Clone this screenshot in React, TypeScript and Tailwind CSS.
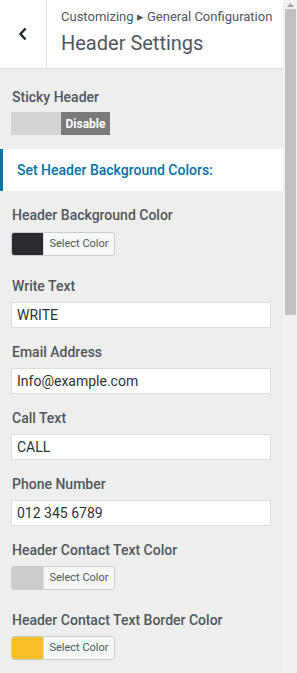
import React from "react";

const font = { fontFamily: "Roboto, 'Noto Sans', sans-serif" };

function Label({ children }: { children: React.ReactNode }) {
  return (
    <div className="pl-[1px] h-[20px] leading-[20px] text-[14px] font-medium text-[#50575e]">{children}</div>
  );
}

function TextField({ label, value }: { label: string; value: string }) {
  return (
    <div className="mb-[14px]">
      <Label>{label}</Label>
      <div className="mt-[6px] w-[260px] h-[26px] bg-white border border-[#dddddd] px-[5px] flex items-center text-[14px] text-[#2c3338]">
        {value}
      </div>
    </div>
  );
}

function ColorButton({ color }: { color: string }) {
  return (
    <div className="flex w-[104px] h-[24px] rounded-[3px] border border-[#cccccc] overflow-hidden bg-[#f6f7f7]">
      <div className="w-[31px] h-full" style={{ backgroundColor: color }} />
      <div className="flex-1 border-l border-[#dcdcde] flex items-center justify-center text-[11px] text-[#50575e]">
        Select Color
      </div>
    </div>
  );
}

function ColorField({ label, color, last }: { label: string; color: string; last?: boolean }) {
  return (
    <div className={last ? "" : "mb-[20px]"}>
      <Label>{label}</Label>
      <div className="mt-[6px]">
        <ColorButton color={color} />
      </div>
    </div>
  );
}

export default function App() {
  return (
    <div className="w-[297px] h-[673px] flex overflow-hidden bg-[#eeeeee]" style={font}>
      <div className="w-[283px] h-full flex flex-col">
        <div className="h-[69px] bg-white border-b border-[#dddddd] flex shrink-0">
          <div className="w-[47px] h-full border-r border-[#dddddd] flex items-center justify-center">
            <svg width="10" height="14" viewBox="0 0 10 14">
              <path d="M7.5 1.5 L2.5 7 L7.5 12.5" fill="none" stroke="#1d2327" strokeWidth="2.4" />
            </svg>
          </div>
          <div className="pl-[14px] pt-[7px]">
            <div className="text-[13px] leading-[20px] text-[#50575e]">Customizing ▸ General Configuration</div>
            <div className="text-[20px] leading-[30px] text-[#50575e] mt-[1px]">Header Settings</div>
          </div>
        </div>
        <div className="pt-[18px]">
          <div className="px-[11px]">
            <Label>Sticky Header</Label>
            <div className="mt-[5px] flex w-[99px] h-[23px]">
              <div className="w-[50px] bg-[#d4d4d4]" />
              <div className="flex-1 bg-[#7a7a7a] text-white text-[12px] font-bold flex items-center justify-center">
                Disable
              </div>
            </div>
          </div>
          <div className="mt-[14px] h-[42px] bg-white border-l-[3px] border-[#0073aa] flex items-center pl-[14px] text-[14px] font-medium text-[#0073aa]">
            Set Header Background Colors:
          </div>
          <div className="pt-[14px] px-[11px]">
            <div className="mb-[20px]">
              <Label>Header Background Color</Label>
              <div className="mt-[7px]">
                <ColorButton color="#2a2a2f" />
              </div>
            </div>
            <TextField label="Write Text" value="WRITE" />
            <TextField label="Email Address" value="Info@example.com" />
            <TextField label="Call Text" value="CALL" />
            <TextField label="Phone Number" value="012 345 6789" />
            <ColorField label="Header Contact Text Color" color="#cccccc" />
            <ColorField label="Header Contact Text Border Color" color="#f9bf29" last />
          </div>
        </div>
      </div>
      <div className="w-[14px] h-full bg-[#f1f1f1] flex flex-col items-center">
        <div className="h-[9px] flex items-center justify-center">
          <svg width="7" height="4" viewBox="0 0 7 4">
            <path d="M3.5 0 L7 4 L0 4 Z" fill="#a3a3a3" />
          </svg>
        </div>
        <div className="w-[11px] h-[306px] bg-[#c1c1c1] ml-[1px]" />
      </div>
    </div>
  );
}
